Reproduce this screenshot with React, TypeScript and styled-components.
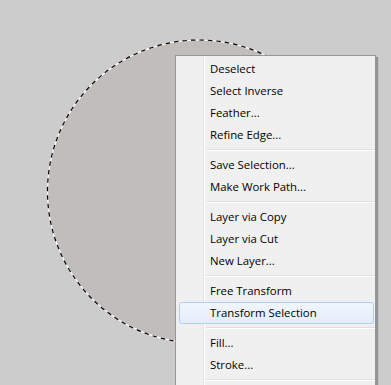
import React from "react";
import styled, { createGlobalStyle } from "styled-components";

const Global = createGlobalStyle`
  html, body { margin: 0; padding: 0; }
  body { width: 391px; height: 385px; overflow: hidden; background: #cccccc; }
`;

const Canvas = styled.div`
  position: relative;
  width: 391px;
  height: 385px;
  background: #cccccc;
  overflow: hidden;
`;

const SelectionShape = styled.svg`
  position: absolute;
  left: 0;
  top: 0;
`;

const Menu = styled.div`
  position: absolute;
  left: 175px;
  top: 55px;
  width: 199px;
  padding: 2px 0 2px 0;
  background: #f0f0f0;
  border: 1px solid #979797;
  box-shadow: 2px 2px 1px rgba(0, 0, 0, 0.28);
  display: flex;
  flex-direction: column;
  font-family: "Open Sans", "Noto Sans", sans-serif;
  font-size: 11.4px;
  color: #000;
  background-image: linear-gradient(
    to right,
    transparent 27px,
    #e2e3e3 27px,
    #e2e3e3 28px,
    #ffffff 28px,
    #ffffff 29px,
    transparent 29px
  );
`;

const Item = styled.div<{ $active?: boolean }>`
  height: 22px;
  margin: 0 1px 0 3px;
  padding: 0 0 1px 30px;
  display: flex;
  align-items: center;
  box-sizing: border-box;
  border-radius: 3px;
  border: 1px solid ${(p) => (p.$active ? "#aecff7" : "transparent")};
  background: ${(p) =>
    p.$active ? "linear-gradient(#f1f6fd, #e3edfa)" : "transparent"};
  white-space: nowrap;
`;

const Separator = styled.div`
  height: 8px;
  margin-left: 30px;
  display: flex;
  flex-direction: column;
  justify-content: center;
  &::before {
    content: "";
    display: block;
    height: 1px;
    background: #e0e0e0;
  }
  &::after {
    content: "";
    display: block;
    height: 1px;
    background: #ffffff;
  }
`;

const groups = [
  ["Deselect", "Select Inverse", "Feather...", "Refine Edge..."],
  ["Save Selection...", "Make Work Path..."],
  ["Layer via Copy", "Layer via Cut", "New Layer..."],
  ["Free Transform", "Transform Selection"],
  ["Fill...", "Stroke..."],
];

export default function App() {
  return (
    <>
      <Global />
      <Canvas>
        <SelectionShape width="391" height="385" viewBox="0 0 391 385">
          <circle cx="199" cy="191.5" r="151.5" fill="#c0bdbb" />
          <circle cx="199" cy="191.5" r="151.5" fill="none" stroke="#ffffff" strokeWidth="1.2" />
          <circle
            cx="199"
            cy="191.5"
            r="151.5"
            fill="none"
            stroke="#000000"
            strokeWidth="1.2"
            strokeDasharray="4.5 4"
          />
        </SelectionShape>
        <Menu>
          {groups.map((g, gi) => (
            <React.Fragment key={gi}>
              {g.map((label) => (
                <Item key={label} $active={label === "Transform Selection"}>
                  {label}
                </Item>
              ))}
              <Separator />
            </React.Fragment>
          ))}
        </Menu>
      </Canvas>
    </>
  );
}
